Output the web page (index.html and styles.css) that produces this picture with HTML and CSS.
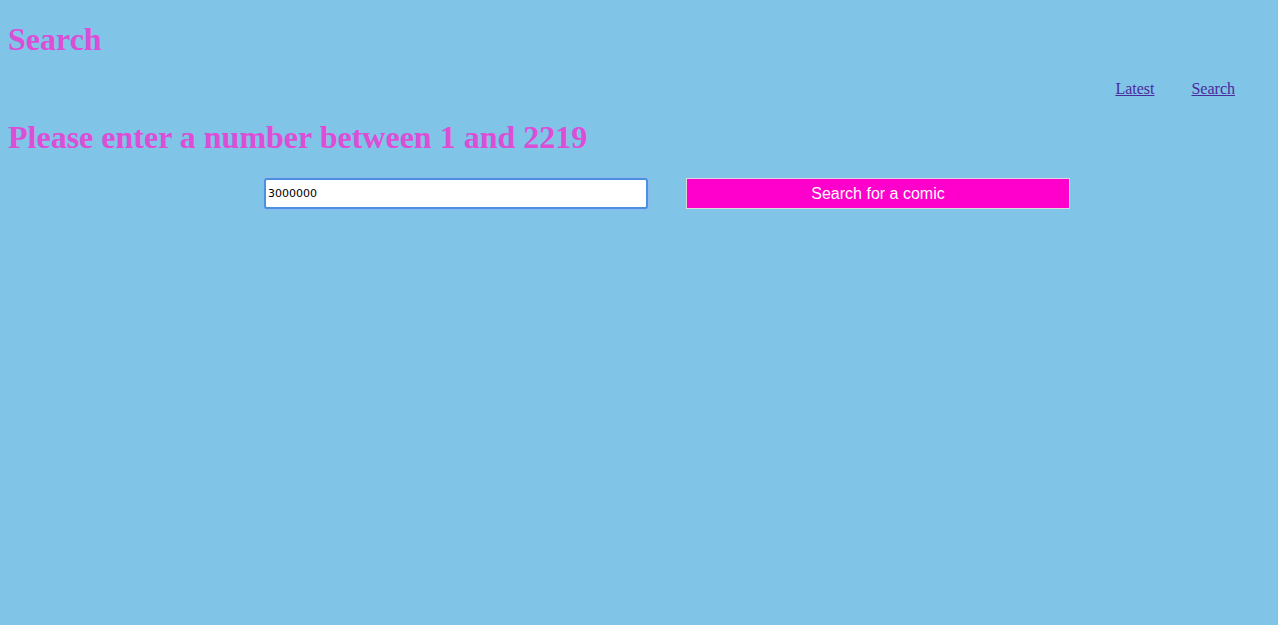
FILE: index.html
```html
<!DOCTYPE html>
<html>
<head>
<meta charset="utf-8">
<link rel="stylesheet" href="styles.css">
</head>
<body>
<header class="top">
  <h1 class="title">Search</h1>
  <nav class="nav">
    <a href="#" class="nav-link">Latest</a>
    <a href="#" class="nav-link">Search</a>
  </nav>
</header>
<main>
  <h1 class="prompt">Please enter a number between 1 and 2219</h1>
  <form class="search-form">
    <input class="search-input" type="text" value="3000000" autofocus>
    <button class="search-btn" type="button">Search for a comic</button>
  </form>
</main>
</body>
</html>
```
FILE: styles.css
```css
html, body {
  margin: 0;
  padding: 0;
  background: #80c4e8;
  height: 100%;
}
body {
  padding: 0 8px;
  font-family: "Liberation Serif", "Times New Roman", serif;
}
.top {
  display: flex;
  flex-direction: column;
  padding-top: 21px;
}
.title, .prompt {
  font-size: 32px;
  font-weight: bold;
  color: #dc4ed6;
  margin: 0;
  line-height: 37px;
}
.nav {
  display: flex;
  justify-content: flex-end;
  gap: 37px;
  padding-right: 35px;
  margin-top: 22px;
  line-height: 18px;
}
.nav-link {
  color: #4b2a9c;
  font-size: 16px;
  text-decoration: underline;
}
.prompt {
  margin-top: 21px;
}
.search-form {
  display: flex;
  gap: 38px;
  padding-left: 256px;
  margin-top: 22px;
}
.search-input {
  box-sizing: border-box;
  width: 384px;
  height: 31px;
  margin: 0;
  padding: 0 2px;
  border: 2px solid #4a90e2;
  border-radius: 3px;
  box-shadow: 0 0 0 1px #8fb9ec;
  background: #fff;
  font-family: "DejaVu Sans", sans-serif;
  font-size: 11px;
  color: #000;
  outline: none;
}
.search-btn {
  box-sizing: border-box;
  width: 384px;
  height: 31px;
  margin: 0;
  background: #ff00cc;
  border: 1px solid #d9d9d9;
  color: #fff;
  font-family: "Liberation Sans", Arial, sans-serif;
  font-size: 16px;
  padding: 0;
}
```
